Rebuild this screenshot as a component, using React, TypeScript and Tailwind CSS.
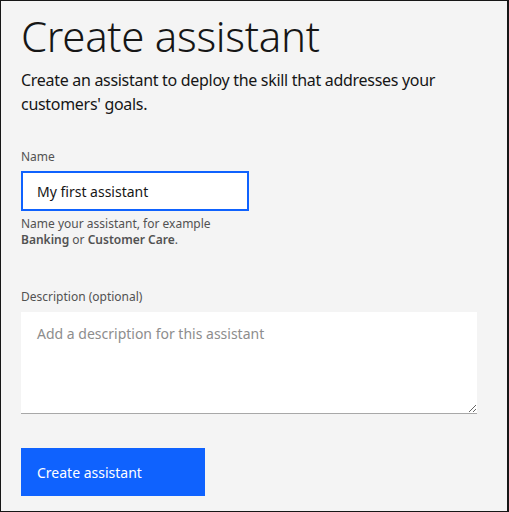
import React, { useState } from 'react'

const font = { fontFamily: '"Noto Sans", "Open Sans", Arial, sans-serif' }

export default function App() {
  const [name, setName] = useState('My first assistant')
  const [description, setDescription] = useState('')

  return (
    <div
      className="w-[509px] h-[512px] bg-[#f4f4f4] border border-r-2 border-[#161616] overflow-hidden"
      style={font}
    >
      <div className="pl-[20px] pr-[30px] pt-[8px]">
        <h1 className="text-[42px] leading-[54px] font-light text-[#161616] tracking-[-0.3px]">
          Create assistant
        </h1>
        <p className="mt-[5px] text-[16px] leading-[24px] text-[#161616] w-[440px] tracking-[-0.3px]">
          Create an assistant to deploy the skill that addresses your customers' goals.
        </p>

        <div className="mt-[33px]">
          <label className="block text-[12px] leading-[16px] text-[#525252] mb-[6px]">Name</label>
          <input
            value={name}
            onChange={(e) => setName(e.target.value)}
            className="w-[228px] h-[40px] bg-white border-2 border-[#0f62fe] px-[14px] text-[14px] text-[#161616] outline-none"
          />
          <p className="mt-[5px] text-[12px] leading-[16px] text-[#525252]">
            Name your assistant, for example
            <br />
            <strong className="font-semibold">Banking</strong> or{' '}
            <strong className="font-semibold">Customer Care</strong>.
          </p>
        </div>

        <div className="mt-[41px]">
          <label className="block text-[12px] leading-[16px] text-[#525252] mb-[7px]">
            Description (optional)
          </label>
          <textarea
            value={description}
            onChange={(e) => setDescription(e.target.value)}
            placeholder="Add a description for this assistant"
            className="block w-[456px] h-[102px] bg-white border-b border-[#a8a8a8] px-[16px] py-[12px] text-[14px] leading-[20px] text-[#161616] placeholder:text-[#8d8d8d] outline-none resize-y"
          />
        </div>

        <button
          type="button"
          className="mt-[34px] w-[184px] h-[48px] bg-[#0f62fe] text-white text-[14px] text-left pl-[16px]"
        >
          Create assistant
        </button>
      </div>
    </div>
  )
}
